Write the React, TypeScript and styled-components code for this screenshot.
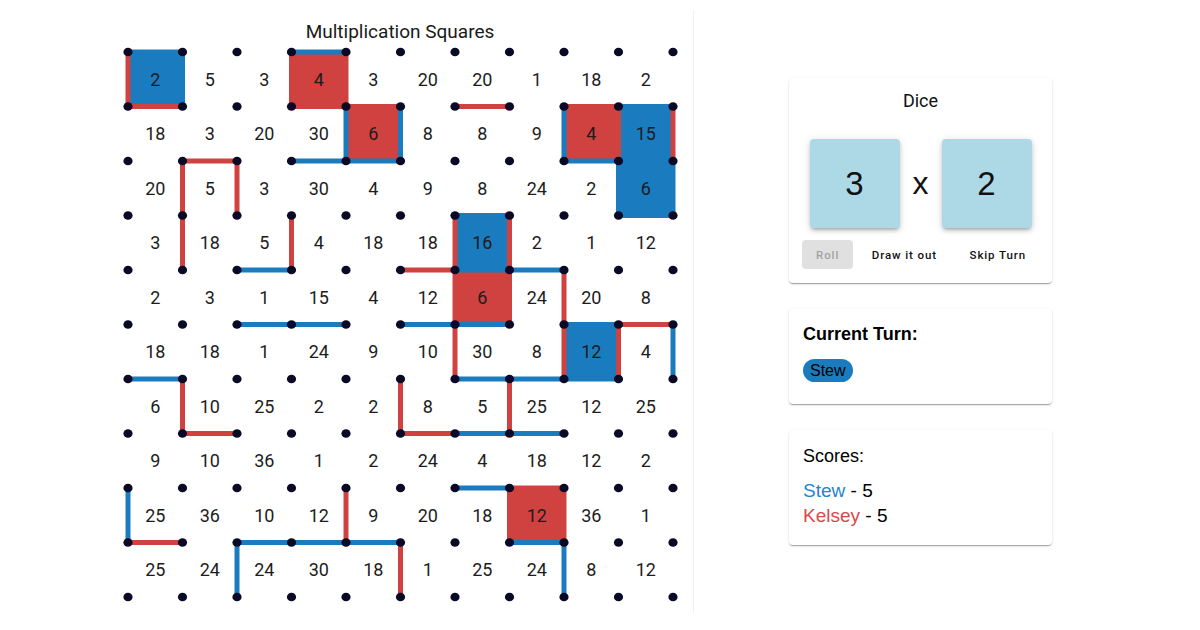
import React from "react";
import styled, { createGlobalStyle } from "styled-components";

const BLUE = "#1b7bbf";
const RED = "#cf4240";
const DOT = "#0b0a26";

const STEP = 54.5;
const OX = 21;
const OY = 8;

const numbers = [
  [2, 5, 3, 4, 3, 20, 20, 1, 18, 2],
  [18, 3, 20, 30, 6, 8, 8, 9, 4, 15],
  [20, 5, 3, 30, 4, 9, 8, 24, 2, 6],
  [3, 18, 5, 4, 18, 18, 16, 2, 1, 12],
  [2, 3, 1, 15, 4, 12, 6, 24, 20, 8],
  [18, 18, 1, 24, 9, 10, 30, 8, 12, 4],
  [6, 10, 25, 2, 2, 8, 5, 25, 12, 25],
  [9, 10, 36, 1, 2, 24, 4, 18, 12, 2],
  [25, 36, 10, 12, 9, 20, 18, 12, 36, 1],
  [25, 24, 24, 30, 18, 1, 25, 24, 8, 12],
];

// [row, col, colour]
const filled: [number, number, string][] = [
  [0, 0, BLUE],
  [0, 3, RED],
  [1, 4, RED],
  [1, 8, RED],
  [1, 9, BLUE],
  [2, 9, BLUE],
  [3, 6, BLUE],
  [4, 6, RED],
  [5, 8, BLUE],
  [8, 7, RED],
];

// h: (c,r) -> (c+1,r), v: (c,r) -> (c,r+1)
const edges: ["h" | "v", number, number, string][] = [
  ["v", 0, 0, RED], ["h", 0, 1, RED], ["h", 0, 0, BLUE], ["v", 1, 0, BLUE],
  ["h", 3, 0, BLUE], ["v", 3, 0, RED], ["h", 3, 1, RED], ["v", 4, 0, RED],
  ["h", 4, 1, RED], ["v", 4, 1, BLUE], ["h", 4, 2, BLUE], ["v", 5, 1, BLUE],
  ["h", 3, 2, BLUE],
  ["h", 6, 1, RED],
  ["h", 8, 1, RED], ["v", 8, 1, BLUE], ["h", 8, 2, BLUE], ["v", 9, 1, RED],
  ["h", 9, 1, BLUE], ["v", 10, 1, RED], ["h", 9, 2, BLUE],
  ["v", 9, 2, BLUE], ["v", 10, 2, BLUE], ["h", 9, 3, BLUE],
  ["h", 1, 2, RED], ["v", 1, 2, RED], ["v", 1, 3, RED], ["v", 2, 2, RED],
  ["v", 3, 3, RED], ["h", 2, 4, BLUE],
  ["h", 2, 5, BLUE], ["h", 3, 5, BLUE],
  ["h", 0, 6, BLUE], ["v", 1, 6, RED], ["h", 1, 7, RED],
  ["h", 5, 4, RED],
  ["h", 6, 3, BLUE], ["v", 6, 3, RED], ["v", 7, 3, RED], ["h", 6, 4, BLUE],
  ["v", 6, 4, RED], ["v", 7, 4, RED], ["h", 6, 5, BLUE], ["h", 5, 5, BLUE],
  ["h", 7, 4, BLUE], ["v", 8, 4, RED], ["v", 8, 5, RED],
  ["h", 8, 5, BLUE], ["v", 9, 5, RED], ["h", 8, 6, BLUE],
  ["h", 9, 5, RED], ["v", 10, 5, BLUE],
  ["v", 6, 5, RED], ["h", 6, 6, BLUE], ["h", 7, 6, BLUE],
  ["v", 5, 6, RED], ["h", 5, 7, RED], ["h", 6, 7, BLUE], ["h", 7, 7, BLUE], ["v", 7, 6, RED],
  ["h", 6, 8, BLUE], ["h", 7, 8, RED], ["v", 7, 8, RED], ["v", 8, 8, RED],
  ["h", 7, 9, BLUE], ["v", 8, 9, BLUE],
  ["v", 0, 8, BLUE], ["h", 0, 9, RED],
  ["v", 4, 8, RED], ["h", 2, 9, BLUE], ["h", 3, 9, BLUE], ["h", 4, 9, BLUE],
  ["v", 2, 9, BLUE], ["v", 5, 9, RED],
];

const px = (c: number) => OX + c * STEP;
const py = (r: number) => OY + r * STEP;

const GlobalStyle = createGlobalStyle`
  body {
    margin: 0;
    background: #fff;
    font-family: Roboto, "Liberation Sans", sans-serif;
  }
`;

const Page = styled.div`
  display: flex;
  align-items: flex-start;
  width: 1200px;
  height: 630px;
`;

const BoardPane = styled.div`
  display: flex;
  flex-direction: column;
  align-items: center;
  margin: 10px 0 0 107px;
  width: 586px;
  height: 603px;
  border-right: 1px solid #f1f1f1;
`;

const Title = styled.div`
  padding-top: 10px;
  font-size: 19px;
  line-height: 24px;
  color: #1a1a1a;
`;

const BoardSvg = styled.svg`
  display: block;
  text {
    font-family: Roboto, sans-serif;
    font-size: 18px;
    fill: #1c1c1c;
  }
`;

const Sidebar = styled.div`
  display: flex;
  flex-direction: column;
  gap: 26px;
  margin-left: 95px;
  padding-top: 78px;
  width: 263px;
`;

const Card = styled.div<{ $pad: string }>`
  background: #fff;
  border-radius: 4px;
  padding: ${(p) => p.$pad};
  box-shadow: 0px 2px 1px -1px rgba(0, 0, 0, 0.2),
    0px 1px 1px 0px rgba(0, 0, 0, 0.14), 0px 1px 3px 0px rgba(0, 0, 0, 0.12);
`;

const DiceTitle = styled.div`
  text-align: center;
  font-size: 18px;
  line-height: 22px;
  color: #111;
`;

const DiceRow = styled.div`
  display: flex;
  justify-content: center;
  align-items: center;
  gap: 13px;
  margin-top: 27px;
`;

const Die = styled.div`
  width: 90px;
  height: 89px;
  display: flex;
  align-items: center;
  justify-content: center;
  background: #add8e6;
  border-radius: 4px;
  font-family: "Liberation Sans", Arial, sans-serif;
  font-size: 33px;
  color: #111;
  box-shadow: 0px 3px 3px -2px rgba(0, 0, 0, 0.2),
    0px 3px 4px 0px rgba(0, 0, 0, 0.14), 0px 1px 8px 0px rgba(0, 0, 0, 0.12);
`;

const Times = styled.span`
  width: 16px;
  text-align: center;
  font-family: "Liberation Sans", Arial, sans-serif;
  font-size: 32px;
  color: #111;
`;

const ButtonRow = styled.div`
  display: flex;
  justify-content: space-between;
  margin-top: 12px;
  padding: 0 12px 0 13px;
`;

const ActionButton = styled.button<{ $off?: boolean }>`
  height: 29px;
  padding: 0 14px;
  border: none;
  border-radius: 4px;
  background: ${(p) => (p.$off ? "#e0e0e0" : "transparent")};
  color: ${(p) => (p.$off ? "#a3a3a3" : "#111")};
  font-family: Roboto, sans-serif;
  font-weight: 500;
  font-size: 11.5px;
  letter-spacing: 0.9px;
  cursor: pointer;
`;

const Heading = styled.div<{ $bold?: boolean }>`
  font-family: "Liberation Sans", Arial, sans-serif;
  font-size: 18px;
  line-height: 21px;
  font-weight: ${(p) => (p.$bold ? 700 : 400)};
  color: #000;
`;

const Chip = styled.span`
  display: inline-block;
  margin-top: 14px;
  padding: 0 7px;
  height: 23px;
  line-height: 23px;
  border-radius: 12px;
  background: ${BLUE};
  font-family: "Liberation Sans", Arial, sans-serif;
  font-size: 16px;
  color: #000;
`;

const ScoreList = styled.div`
  margin-top: 11px;
  font-family: "Liberation Sans", Arial, sans-serif;
  font-size: 19px;
  line-height: 25px;
  color: #000;
`;

const Player = styled.span<{ $color: string }>`
  color: ${(p) => p.$color};
`;

const Board = () => (
  <BoardSvg width={586} height={563} viewBox="0 0 586 563">
    {filled.map(([r, c, col]) => (
      <rect key={`f${r}-${c}`} x={px(c)} y={py(r)} width={STEP} height={STEP} fill={col} />
    ))}
    {edges.map(([t, c, r, col], i) => (
      <line
        key={`e${i}`}
        x1={px(c)}
        y1={py(r)}
        x2={t === "h" ? px(c + 1) : px(c)}
        y2={t === "v" ? py(r + 1) : py(r)}
        stroke={col}
        strokeWidth={5}
      />
    ))}
    {numbers.map((row, r) =>
      row.map((n, c) => (
        <text
          key={`n${r}-${c}`}
          x={px(c) + STEP / 2}
          y={py(r) + STEP / 2 + 6.5}
          textAnchor="middle"
        >
          {n}
        </text>
      ))
    )}
    {Array.from({ length: 11 }).map((_, r) =>
      Array.from({ length: 11 }).map((__, c) => (
        <ellipse key={`d${r}-${c}`} cx={px(c)} cy={py(r)} rx={4.6} ry={4.3} fill={DOT} />
      ))
    )}
  </BoardSvg>
);

export default function App() {
  return (
    <>
      <GlobalStyle />
      <Page>
        <BoardPane>
          <Title>Multiplication Squares</Title>
          <Board />
        </BoardPane>
        <Sidebar>
          <Card $pad="12px 0 14px">
            <DiceTitle>Dice</DiceTitle>
            <DiceRow>
              <Die>3</Die>
              <Times>x</Times>
              <Die>2</Die>
            </DiceRow>
            <ButtonRow>
              <ActionButton $off disabled>
                Roll
              </ActionButton>
              <ActionButton>Draw it out</ActionButton>
              <ActionButton>Skip Turn</ActionButton>
            </ButtonRow>
          </Card>
          <Card $pad="15px 14px 22px">
            <Heading $bold>Current Turn:</Heading>
            <Chip>Stew</Chip>
          </Card>
          <Card $pad="16px 14px 17px">
            <Heading>Scores:</Heading>
            <ScoreList>
              <div>
                <Player $color="#1f86cf">Stew</Player> - 5
              </div>
              <div>
                <Player $color="#d94a4a">Kelsey</Player> - 5
              </div>
            </ScoreList>
          </Card>
        </Sidebar>
      </Page>
    </>
  );
}
